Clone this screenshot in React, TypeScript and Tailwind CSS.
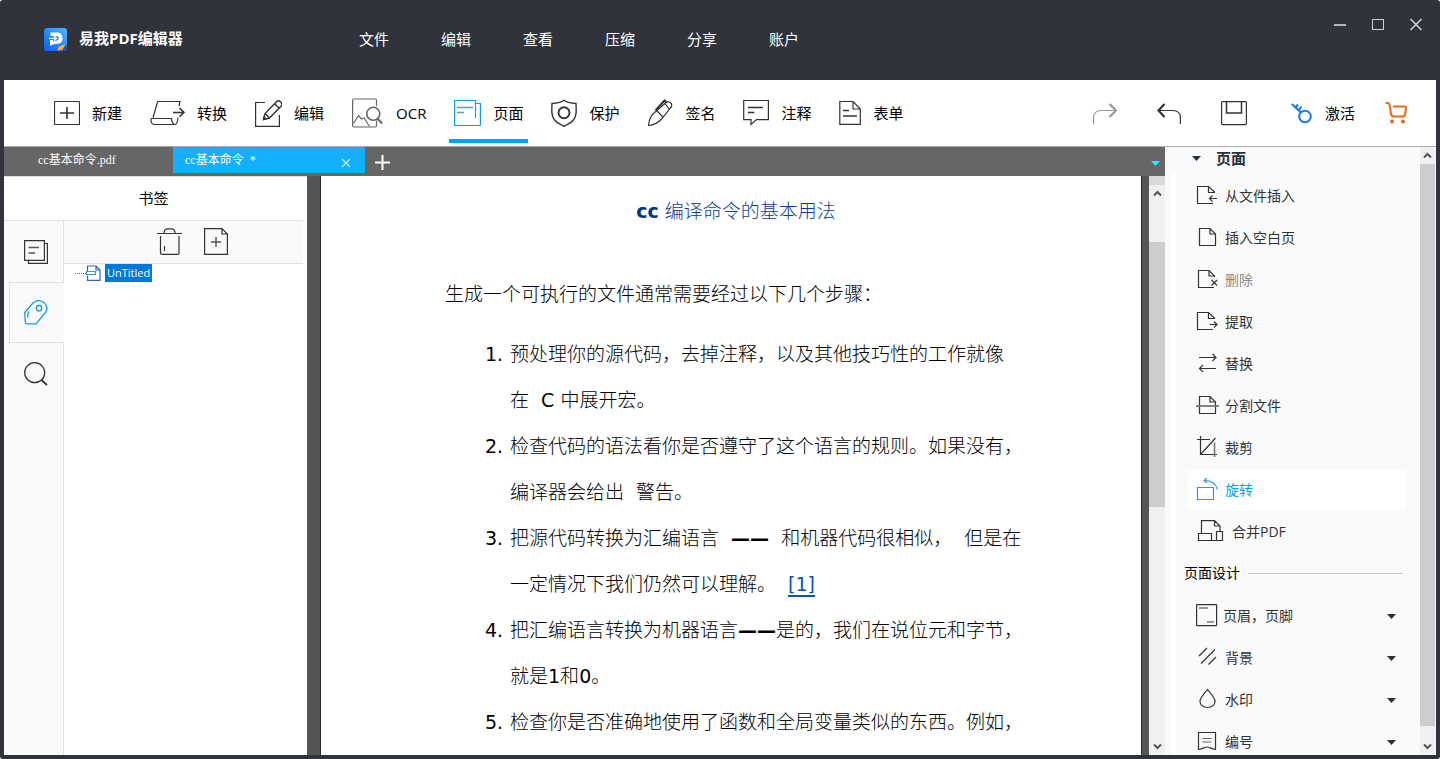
import type { ReactNode } from 'react';

interface IconProps {
  w: number;
  h: number;
  color?: string;
  strokeWidth?: number;
  children: ReactNode;
}

function Icon({ w, h, color = '#333', strokeWidth = 1.2, children }: IconProps) {
  return (
    <svg
      width={w}
      height={h}
      viewBox={`0 0 ${w} ${h}`}
      fill="none"
      stroke={color}
      strokeWidth={strokeWidth}
      className="shrink-0"
      aria-hidden="true"
    >
      {children}
    </svg>
  );
}

const menus = ['文件', '编辑', '查看', '压缩', '分享', '账户'];

const tools = [
  {
    label: '新建',
    icon: (
      <Icon w={26} h={28}>
        <rect x="0.5" y="2.5" width="25" height="23" rx="1" />
        <path d="M6 14H20M13 8V20" strokeWidth="1.6" />
      </Icon>
    ),
  },
  {
    label: '转换',
    icon: (
      <Icon w={35} h={28}>
        <path d="M29 7L30 2.5H7.7L3 18.5M1 19.5H21.5C21.5 22 23 25.5 25.3 25.5C27 25.5 27.5 23 28 18.5M1 19.5C.5 23 2 25.5 4 25.5H25.3" />
        <path d="M23 13.4H34M29.5 9L34 13.4L29.5 17.8" strokeWidth="1.5" />
      </Icon>
    ),
  },
  {
    label: '编辑',
    icon: (
      <Icon w={27} h={28}>
        <path d="M10 3.5H.6V27.4H24.4V16" />
        <path d="M8.5 20.5L10 14.5L21.5 2.7C24 .2 28.5 4.5 26 7.2L14.5 19ZM10 14.5L14.5 19M19.5 4.7L24.2 9.2" strokeWidth="1.4" />
        <path d="M8.5 20.5L9 18L11 20Z" fill="#333" />
      </Icon>
    ),
  },
  {
    label: 'OCR',
    icon: (
      <Icon w={32} h={30} color="#666">
        <path d="M24.5 8V2.5C24.5 1.5 24 1 23 1H2C1 1 .6 1.5 .6 2.5V27.5C.6 28.5 1 29 2 29H23C24 29 24.5 28.5 24.5 27.5V22.5" />
        <path d="M1.5 25.5L6.5 17.5L9.5 21L12 20L17.5 28.5" />
        <circle cx="21.3" cy="15.8" r="6.5" strokeWidth="1.6" />
        <path d="M25.5 20.5L30 25.5" strokeWidth="2" />
      </Icon>
    ),
  },
  {
    label: '页面',
    active: true,
    icon: (
      <Icon w={27} h={28} color="#1b9ae0">
        <path d="M21.5 19V1.5H.6V26.5H26.4V4.5H21.5" />
        <path d="M3 8.5H19M3 13.5H10" stroke="#5c9cc0" strokeWidth="1.5" />
      </Icon>
    ),
  },
  {
    label: '保护',
    icon: (
      <Icon w={26} h={28} strokeWidth={1.4}>
        <path d="M13 1.3C10 4 5 4.3 1 4.5C.6 12 .4 17 3.5 21C6 24 9.5 25 13 27.3C16.5 25 20 24 22.5 21C25.6 17 25.4 12 25 4.5C21 4.3 16 4 13 1.3Z" />
        <circle cx="13" cy="13.7" r="5.5" strokeWidth="1.9" />
      </Icon>
    ),
  },
  {
    label: '签名',
    icon: (
      <Icon w={26} h={28}>
        <path d="M1.5 26.5C2 21.5 3 17.5 7 14L18.5 4C21 2 23 3 24.3 4.5C25.3 6.5 24.5 8 23 9.5L15 19.5C12 23 8 26 1.5 26.5ZM10 12L16 18M18 4.5L22.5 10.5" />
        <path d="M8.5 11.5L17.5 1.5L19.5 3.5" strokeWidth="2" />
      </Icon>
    ),
  },
  {
    label: '注释',
    icon: (
      <Icon w={26} h={28}>
        <path d="M.7 1.5H25.4V20.6H13.5L8 25.5V20.6H.7Z" />
        <path d="M5 8.4H20M5 13.4H11.5" strokeWidth="1.5" />
      </Icon>
    ),
  },
  {
    label: '表单',
    icon: (
      <Icon w={22} h={28}>
        <path d="M.8 2.5H14L21.3 10V25.4H.8ZM14 2.5V10H21.3" />
        <path d="M4 11.5H10M4 17H18" strokeWidth="1.6" />
      </Icon>
    ),
  },
];

const FOLD = 'M12.5 2.5V8.5H18.5';

const pageActions = [
  {
    label: '从文件插入',
    icon: (
      <Icon w={24} h={24}>
        <path d={FOLD} />
        <path d="M18.5 9V8L12.5 2.5H1.5V19.5H17M21 14.5H13.5M16.5 11.5L13.5 14.5L16.5 17.5" />
      </Icon>
    ),
  },
  {
    label: '插入空白页',
    icon: (
      <Icon w={24} h={24}>
        <path d="M3.5 2.5H14L19.5 8V19.5H3.5ZM14 2.5V8H19.5" />
      </Icon>
    ),
  },
  {
    label: '删除',
    disabled: true,
    icon: (
      <Icon w={24} h={24}>
        <path d="M18.5 9V8L13 2.5H2.5V19.5H18M13 2.5V8H18.5M15.5 12L21 17.5M21 12L15.5 17.5" />
      </Icon>
    ),
  },
  {
    label: '提取',
    icon: (
      <Icon w={24} h={24}>
        <path d={FOLD} />
        <path d="M18.5 9V8L12.5 2.5H1.5V19.5H17M13.5 14.5H21M18 11.5L21 14.5L18 17.5" />
      </Icon>
    ),
  },
  {
    label: '替换',
    icon: (
      <Icon w={24} h={24}>
        <path d="M3 5.5H20M16.5 2L20 5.5L16.5 9M20 16.5H3.5M7 13L3.5 16.5L7 20" />
      </Icon>
    ),
  },
  {
    label: '分割文件',
    icon: (
      <Icon w={24} h={24}>
        <path d="M3.5 2.5H14L19.5 8V19.5H3.5ZM14 2.5V8H19.5" />
        <path d="M0 12H23" stroke="#777" strokeWidth="1.8" />
      </Icon>
    ),
  },
  {
    label: '裁剪',
    icon: (
      <Icon w={24} h={24}>
        <path d="M1 3.5H14M4.5 0V18.5H21M4.5 18.5L19.5 2" />
        <path d="M18.5 6.5V21" stroke="#777" strokeWidth="1.6" />
      </Icon>
    ),
  },
  {
    label: '旋转',
    active: true,
    icon: (
      <Icon w={24} h={24} color="#2b9bdc">
        <path d="M1.5 9.5H17.5V21.5H1.5ZM8 2.5C15 2.5 20 5.5 21.5 11.5M11 0L8 2.5L11 5" />
      </Icon>
    ),
  },
  {
    label: '合并PDF',
    icon: (
      <Icon w={31} h={24}>
        <path d="M5.5 13.5V.6H18.5L24 6V11.5M18.5 .6V6H24M2.5 13.5H15.5V20.5H2.5ZM15.5 20.5H20.5M20.5 11.5H26.5V20.5H20.5Z" />
      </Icon>
    ),
  },
];

const designActions = [
  {
    label: '页眉，页脚',
    icon: (
      <Icon w={22} h={24}>
        <rect x="0.6" y="0.6" width="20" height="21" rx="0.5" />
        <path d="M3 4H12M11 18H18" stroke="#777" strokeWidth="1.5" />
      </Icon>
    ),
  },
  {
    label: '背景',
    icon: (
      <Icon w={24} h={24}>
        <path d="M3 10L11 2M5 17.5L19 3.5M12.5 18.5L20 11" />
      </Icon>
    ),
  },
  {
    label: '水印',
    icon: (
      <Icon w={24} h={24}>
        <path d="M11.5 1.5C9 5 4 9.5 4 13.5C4 17 7.5 19.5 11.5 19.5C15.5 19.5 19 17 19 13.5C19 9.5 14 5 11.5 1.5Z" />
      </Icon>
    ),
  },
  {
    label: '编号',
    icon: (
      <Icon w={24} h={24}>
        <path d="M2.5 2.5H19.5V19.5C16.5 19.5 13.5 17 11 17C8.5 17 5.5 19.5 2.5 19.5Z" />
        <path d="M6.5 8.5H15.5M6.5 12H15.5" stroke="#666" />
      </Icon>
    ),
  },
];

// Latin letters and digits are set heavier than the Chinese text around them
function Latin({ children }: { children: ReactNode }) {
  return <span className="font-normal">{children}</span>;
}

function Dash() {
  return <span className="font-bold">——</span>;
}

// Each step keeps the line breaks of the printed page
const steps: ReactNode[][] = [
  ['预处理你的源代码，去掉注释，以及其他技巧性的工作就像', <>在{'  '}<Latin>C</Latin> 中展开宏。</>],
  ['检查代码的语法看你是否遵守了这个语言的规则。如果没有，', '编译器会给出  警告。'],
  [
    <>把源代码转换为汇编语言{'  '}<Dash />{'  '}和机器代码很相似，  但是在</>,
    <>
      一定情况下我们仍然可以理解。{'  '}
      <a href="#ref-1" className="font-normal text-[#0b4fc0] underline decoration-2 underline-offset-4 [text-decoration-skip-ink:none]">[1]</a>
    </>,
  ],
  [<>把汇编语言转换为机器语言<Dash />是的，我们在说位元和字节，</>, <>就是<Latin>1</Latin>和<Latin>0</Latin>。</>],
  ['检查你是否准确地使用了函数和全局变量类似的东西。例如，'],
];

function Caret({ className }: { className: string }) {
  return (
    <svg width="9" height="5" viewBox="0 0 9 5" className={`shrink-0 ${className}`} aria-hidden="true">
      <path d="M0 0H9L4.5 5Z" fill="currentColor" />
    </svg>
  );
}

function ScrollButton({ down }: { down?: boolean }) {
  return (
    <button aria-label={down ? '向下滚动' : '向上滚动'} className="flex h-[17px] shrink-0 items-center justify-center">
      <Icon w={9} h={7} color="#555" strokeWidth={2}>
        <path d={down ? 'M1 1.5L4.5 5L8 1.5' : 'M1 5.5L4.5 2L8 5.5'} />
      </Icon>
    </button>
  );
}

function TitleBar() {
  return (
    <header className="flex h-20 shrink-0 pl-10 pr-[9px] text-[15px] text-white">
      <div className="flex w-[315px] items-center gap-3 pb-0.5">
        <svg width="23" height="23" viewBox="0 0 23 23" aria-hidden="true">
          <defs>
            <linearGradient id="logo" x1="0" y1="1" x2="1" y2="0">
              <stop offset="0" stopColor="#0560ea" />
              <stop offset="1" stopColor="#52b8ff" />
            </linearGradient>
          </defs>
          <rect width="23" height="23" rx="3" fill="url(#logo)" />
          <path d="M6.5 4.5H13C16.5 4.5 18.5 7 18.5 10.3C18.5 14 16 16 12.5 16L10 16.2L6 17.8V12H9V13.5L13 12.5C15.5 11.5 15.5 8.5 13 8H6.5Z" fill="#fff" />
          <path d="M5 10.3H12M10 8L12.5 10.3L10 12.5" stroke="#fff" strokeWidth="1.2" fill="none" />
          <path d="M19.5 17L23 17.5V20C23 22 22 23 20 23L17.5 22.5Z" fill="#24589c" />
          <path d="M14 20.5C14.5 18.5 16 18 17.5 17.5L21.5 16.5L18.5 21.5L14 22.5Z" fill="#ffae35" />
        </svg>
        <h1 className="pb-0.5 font-bold">易我PDF编辑器</h1>
      </div>
      <nav className="flex flex-1 items-center gap-[52px] pb-0.5">
        {menus.map(menu => (
          <button key={menu}>{menu}</button>
        ))}
      </nav>
      <div className="flex items-start gap-6 pt-[17px] pr-1">
        <button aria-label="最小化">
          <Icon w={14} h={14} color="#b4b5ba" strokeWidth={2}>
            <path d="M1 8H13" />
          </Icon>
        </button>
        <button aria-label="最大化">
          <Icon w={14} h={14} color="#d0d0d4" strokeWidth={1}>
            <rect x="1.5" y="2.5" width="11" height="10" />
          </Icon>
        </button>
        <button aria-label="关闭">
          <Icon w={14} h={14} color="#e4e4e6" strokeWidth={1.3}>
            <path d="M1.5 2L12.5 13M12.5 2L1.5 13" />
          </Icon>
        </button>
      </div>
    </header>
  );
}

function Toolbar() {
  return (
    <div className="flex h-[67px] shrink-0 justify-between border-b border-[#a9aaa9] bg-white pl-[45px] pr-[29px] text-[15px] text-black">
      <div className="flex gap-[18px]">
        {tools.map(tool => (
          <button
            key={tool.label}
            className={`mb-[3px] flex items-center gap-3 border-b-4 px-[5px] pt-[7px] ${
              tool.active ? 'border-[#00a2ff]' : 'border-transparent'
            }`}
          >
            {tool.icon}
            {tool.label}
          </button>
        ))}
      </div>
      <div className="flex items-center gap-10">
        <button aria-label="重做">
          <Icon w={24} h={28} color="#999">
            <path d="M.6 25V19C.6 14 3.5 11.5 8 11.5H22" />
            <path d="M16.5 5L23 11.5L16.5 18" strokeWidth="2.2" />
          </Icon>
        </button>
        <button aria-label="撤销">
          <Icon w={24} h={28}>
            <path d="M23.4 25V19C23.4 14 20.5 11.5 16 11.5H2" />
            <path d="M7.5 5L1.5 11.5L7.5 18" strokeWidth="2.2" />
          </Icon>
        </button>
        <button aria-label="保存">
          <Icon w={26} h={28}>
            <rect x="0.6" y="2.6" width="24.8" height="23" rx="1" />
            <path d="M5.5 2.6V14H20.5V2.6" strokeWidth="1.5" />
          </Icon>
        </button>
        <button className="ml-1 flex items-center gap-[13px]">
          <Icon w={21} h={28} color="#1677f2" strokeWidth={2}>
            <circle cx="14" cy="17.5" r="5.8" />
            <path d="M10 13.5L.8 5M4.5 8.5L7 5.5M7.5 11.5L10.5 7.5" />
          </Icon>
          激活
        </button>
        <button aria-label="购买" className="-ml-[10px]">
          <Icon w={22} h={28} color="#ec6a12" strokeWidth={2}>
            <path d="M.5 4H2.5C4 4 4.5 5 4.7 6.5L6 14.5C6.3 16.5 7 17.5 9 17.5H17.5C19 17.5 20 16.5 20.2 15L21 9.5C21.2 8 20.5 7.5 19.5 7.5H8" />
            <circle cx="7" cy="22.5" r="2" fill="#ec6a12" stroke="none" />
            <circle cx="18" cy="22.5" r="2" fill="#ec6a12" stroke="none" />
          </Icon>
        </button>
      </div>
    </div>
  );
}

function TabStrip() {
  return (
    <div className="flex h-[29px] shrink-0 bg-[#666] pl-px font-['Liberation_Serif','Noto_Sans_CJK_SC',serif] text-xs text-white">
      <button className="w-[168px] pb-[3px] pl-[33px] text-left">cc基本命令.pdf</button>
      <div className="mb-[3px] flex w-48 items-center justify-between bg-[#14afff] pl-3 pr-[14px]">
        <button>cc基本命令 &nbsp;*</button>
        <button aria-label="关闭标签页" className="pt-[5px]">
          <Icon w={10} h={10} color="#c4eaff" strokeWidth={1.2}>
            <path d="M1 1L9 9M9 1L1 9" />
          </Icon>
        </button>
      </div>
      <button aria-label="新建标签页" className="pl-[9px] pt-0.5">
        <Icon w={17} h={17} color="#fff" strokeWidth={2}>
          <path d="M1 8.5H16M8.5 1V16" />
        </Icon>
      </button>
      <button aria-label="标签页列表" className="ml-auto pr-[5px] pt-1">
        <Caret className="text-[#00ffff]" />
      </button>
    </div>
  );
}

function BookmarkPanel() {
  return (
    <aside className="flex w-[303px] shrink-0 flex-col border-t border-[#e0e0e0] bg-white">
      <h2 className="mr-1 flex h-11 shrink-0 items-center justify-center border-b border-[#e0e0e0] text-[15px] text-black">
        书签
      </h2>
      <div className="flex min-h-0 flex-1">
        <div className="flex w-[60px] shrink-0 flex-col bg-[#fafafa]">
          <button aria-label="页面缩略图" className="flex h-[61px] items-center border-r border-[#e0e0e0] pl-5">
            <Icon w={24} h={24}>
              <path d="M.6 .6H20.4V20.4H.6ZM20.4 3.5H23.4V23.4H4.5V20.4" />
              <path d="M4.5 7.5H15M4.5 13H11" strokeWidth="1.5" stroke="#555" />
            </Icon>
          </button>
          <button aria-label="书签" className="ml-[5px] flex h-[61px] items-center border-y border-l border-[#e0e0e0] pl-[14px]">
            <Icon w={24} h={25} color="#1a9be6" strokeWidth={1.3}>
              <path d="M.7 12.5L9 3C12 .3 16 .2 19 2C22.5 4.5 24 8.5 21.5 12.5L12 23.8H2.5C1.5 23.8 1.4 23 1.3 22ZM4.8 11.5C3.6 13 3.6 15 4 17.5" />
              <circle cx="15" cy="8.2" r="2.7" />
            </Icon>
          </button>
          <button aria-label="搜索" className="flex h-[61px] items-center border-r border-[#e0e0e0] pl-5">
            <Icon w={24} h={24} strokeWidth={1.3}>
              <circle cx="10.7" cy="10.7" r="10" />
              <path d="M17.5 18L23 23" strokeWidth="1.8" />
            </Icon>
          </button>
          <div className="flex-1 border-r border-[#e0e0e0]" />
        </div>
        <div className="flex-1">
          <div className="mr-1 flex h-[43px] items-center gap-[22px] border-b border-[#e0e0e0] bg-[#fafafa] pb-0.5 pl-[93px]">
            <button aria-label="删除书签">
              <Icon w={25} h={27}>
                <path d="M0 5.5H25M7 5.5C7 2 8 1 10 .8H15C17 1 18 2 18 5.5M3.5 8V25C3.5 26 4 26.4 5 26.4H20.5C21.5 26.4 22 26 22 25V8M7.5 18V23" />
              </Icon>
            </button>
            <button aria-label="新建书签">
              <Icon w={25} h={27}>
                <path d="M.6 .6H18L23.4 6V26.4H.6ZM18 .6V6H23.4" />
                <path d="M7 14H17M12 9V19" strokeWidth="1.5" stroke="#555" />
              </Icon>
            </button>
          </div>
          <div className="flex items-center pl-[11px]">
            <span className="w-[11px] border-t border-dotted border-[#666]" />
            <Icon w={15} h={16} color="#3568a4">
              <path d="M1.5 6V1H10L14 5V15.3H1.5V10.5M10 1V5H14" />
              <path d="M.5 6.5H9.5V9.5H.5Z" stroke="#2f9fd0" />
            </Icon>
            <button className="ml-1 bg-[#0078d7] px-0.5 text-[11px] leading-[18px] text-white">UnTitled</button>
          </div>
        </div>
      </div>
    </aside>
  );
}

function DocumentView() {
  return (
    <main className="flex min-w-0 flex-1 bg-[#555] pl-[13px]">
      <article className="min-w-0 flex-1 overflow-hidden whitespace-pre border-x border-[#2a2a2a] bg-white pl-[124px] pr-[114px] pt-3 font-['DejaVu_Sans','Noto_Sans_CJK_SC',sans-serif] text-[19px] leading-[46px] font-light text-black">
        <h2 className="text-center text-[#0b3c99]">
          <span className="font-bold text-[#003580]">cc</span> 编译命令的基本用法
        </h2>
        <p className="mt-[37px]">生成一个可执行的文件通常需要经过以下几个步骤：</p>
        <ol className="mt-[14px] pl-10">
          {steps.map((lines, i) => (
            <li key={i} className="flex">
              <span className="w-[25px] shrink-0 font-normal">{i + 1}.</span>
              <div>
                {lines.map((line, j) => (
                  <p key={j}>{line}</p>
                ))}
              </div>
            </li>
          ))}
        </ol>
      </article>
      <div className="ml-[7px] flex w-4 flex-col bg-[#f0f0f0]">
        <div className="h-[9px] shrink-0 bg-[#dadada]" />
        <ScrollButton />
        <div className="grow-[40]" />
        <div className="grow-[265] bg-[#cdcdcd]" />
        <div className="grow-[231]" />
        <ScrollButton down />
      </div>
    </main>
  );
}

function PagePanel() {
  return (
    <aside className="flex w-[271px] shrink-0 bg-[#fafafa] text-sm text-[#333]">
      <div className="mt-[25px] ml-[6px] w-[5px] bg-white" />
      <div className="min-w-0 flex-1 overflow-hidden">
        <button className="flex h-7 w-full items-center gap-[15px] bg-[#f9fafc] pb-[5px] pl-4 text-[15px] font-bold text-[#2b2f3a]">
          <Caret className="" />
          页面
        </button>
        <div className="pl-2 pr-[14px]">
          {pageActions.map(action => (
            <div key={action.label} className="flex h-[42px] items-center pl-1">
              <button
                disabled={action.disabled}
                className={`flex h-10 w-full items-center gap-[5px] pl-2 ${action.active ? 'bg-white text-[#00a2ff]' : ''} ${
                  action.disabled ? 'text-[#8a8a8a]' : ''
                }`}
              >
                {action.icon}
                {action.label}
              </button>
            </div>
          ))}
          <h3 className="flex h-[42px] items-center gap-2 pb-0.5 pr-[3px] text-black">
            页面设计
            <span className="flex-1 border-t border-[#c8c8c8]" />
          </h3>
          {designActions.map(action => (
            <button key={action.label} className="flex h-[42px] w-full items-center gap-[5px] pl-3 pr-[10px]">
              {action.icon}
              {action.label}
              <Caret className="ml-auto text-[#2b2f3a]" />
            </button>
          ))}
        </div>
      </div>
      <div className="mr-px flex w-[15px] flex-col bg-[#f0f0f0]">
        <ScrollButton />
        <div className="grow-[562] bg-[#cdcdcd]" />
        <div className="grow-[12]" />
        <ScrollButton down />
      </div>
    </aside>
  );
}

export default function App() {
  return (
    <div className="bg-white">
      <div className="flex h-screen flex-col overflow-hidden rounded-[3px] bg-[#30323c] px-1 pb-1 font-['Open_Sans','Noto_Sans_CJK_SC',sans-serif]">
        <TitleBar />
        <Toolbar />
        <div className="flex min-h-0 flex-1">
          <div className="flex min-w-0 flex-1 flex-col">
            <TabStrip />
            <div className="flex min-h-0 flex-1">
              <BookmarkPanel />
              <DocumentView />
            </div>
          </div>
          <PagePanel />
        </div>
      </div>
    </div>
  );
}
